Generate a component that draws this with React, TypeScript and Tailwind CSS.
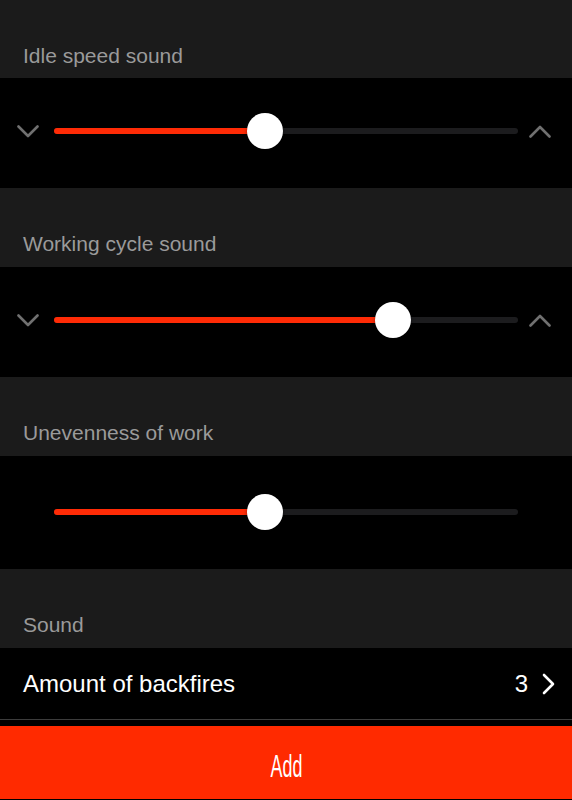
import React from "react";

type SliderRowProps = {
  value: number;
  arrows?: boolean;
  tall?: boolean;
};

function Chevron({ up = false }: { up?: boolean }) {
  return (
    <svg width="22" height="13" viewBox="0 0 22 13" fill="none" className="shrink-0">
      <path
        d={up ? "M1.5 11.5 L11 2 L20.5 11.5" : "M1.5 1.5 L11 11 L20.5 1.5"}
        stroke="#707070"
        strokeWidth="2.6"
        strokeLinecap="round"
        strokeLinejoin="round"
      />
    </svg>
  );
}

function SliderRow({ value, arrows = true, tall = false }: SliderRowProps) {
  return (
    <div className={`flex items-center bg-black pl-[17px] pr-[21px] ${tall ? "h-[113px] pb-[1px]" : "h-[110px] pb-[4px]"}`}>
      <div className={arrows ? "" : "invisible"}>
        <Chevron />
      </div>
      <div className="relative ml-[15px] mr-[11px] h-[6px] flex-1 rounded-full bg-[#1c1c1e]">
        <div className="absolute left-0 top-0 h-[6px] rounded-full bg-[#ff2b06]" style={{ width: `${value * 100}%` }} />
        <div
          className="absolute top-1/2 h-[36px] w-[36px] -translate-x-1/2 -translate-y-1/2 rounded-full bg-white shadow-[0_2px_4px_rgba(0,0,0,0.4)]"
          style={{ left: `${value * 100}%` }}
        />
      </div>
      <div className={arrows ? "" : "invisible"}>
        <Chevron up />
      </div>
    </div>
  );
}

function SectionHeader({ title, first = false }: { title: string; first?: boolean }) {
  return (
    <div className={`bg-[#1b1b1b] px-[23px] pt-[44px] ${first ? "h-[78px]" : "h-[79px]"}`}>
      <p className="text-[21px] leading-[24px] text-[#9a9a9a]">{title}</p>
    </div>
  );
}

export default function App() {
  return (
    <div className="flex h-[800px] w-full flex-col bg-black font-['Liberation_Sans',Arial,sans-serif]">
      <SectionHeader title="Idle speed sound" first />
      <SliderRow value={0.455} />
      <SectionHeader title="Working cycle sound" />
      <SliderRow value={0.731} />
      <SectionHeader title="Unevenness of work" />
      <SliderRow value={0.455} arrows={false} tall />
      <SectionHeader title="Sound" />
      <div className="flex h-[72px] items-center justify-between border-b border-[#3c3c3c] bg-black pl-[23px] pr-[17px]">
        <span className="text-[24px] text-white">Amount of backfires</span>
        <div className="flex items-center gap-[14px]">
          <span className="text-[24px] text-white">3</span>
          <svg width="13" height="22" viewBox="0 0 13 22" fill="none">
            <path d="M2 2 L11 11 L2 20" stroke="#ffffff" strokeWidth="2.6" strokeLinecap="round" strokeLinejoin="round" />
          </svg>
        </div>
      </div>
      <div className="h-[6px] bg-black" />
      <button type="button" className="flex h-[73px] w-full items-center justify-center bg-[#ff2a00] pt-[6px]">
        <span className="inline-block origin-center scale-x-[0.56] text-[32px] leading-none text-white">Add</span>
      </button>
    </div>
  );
}
